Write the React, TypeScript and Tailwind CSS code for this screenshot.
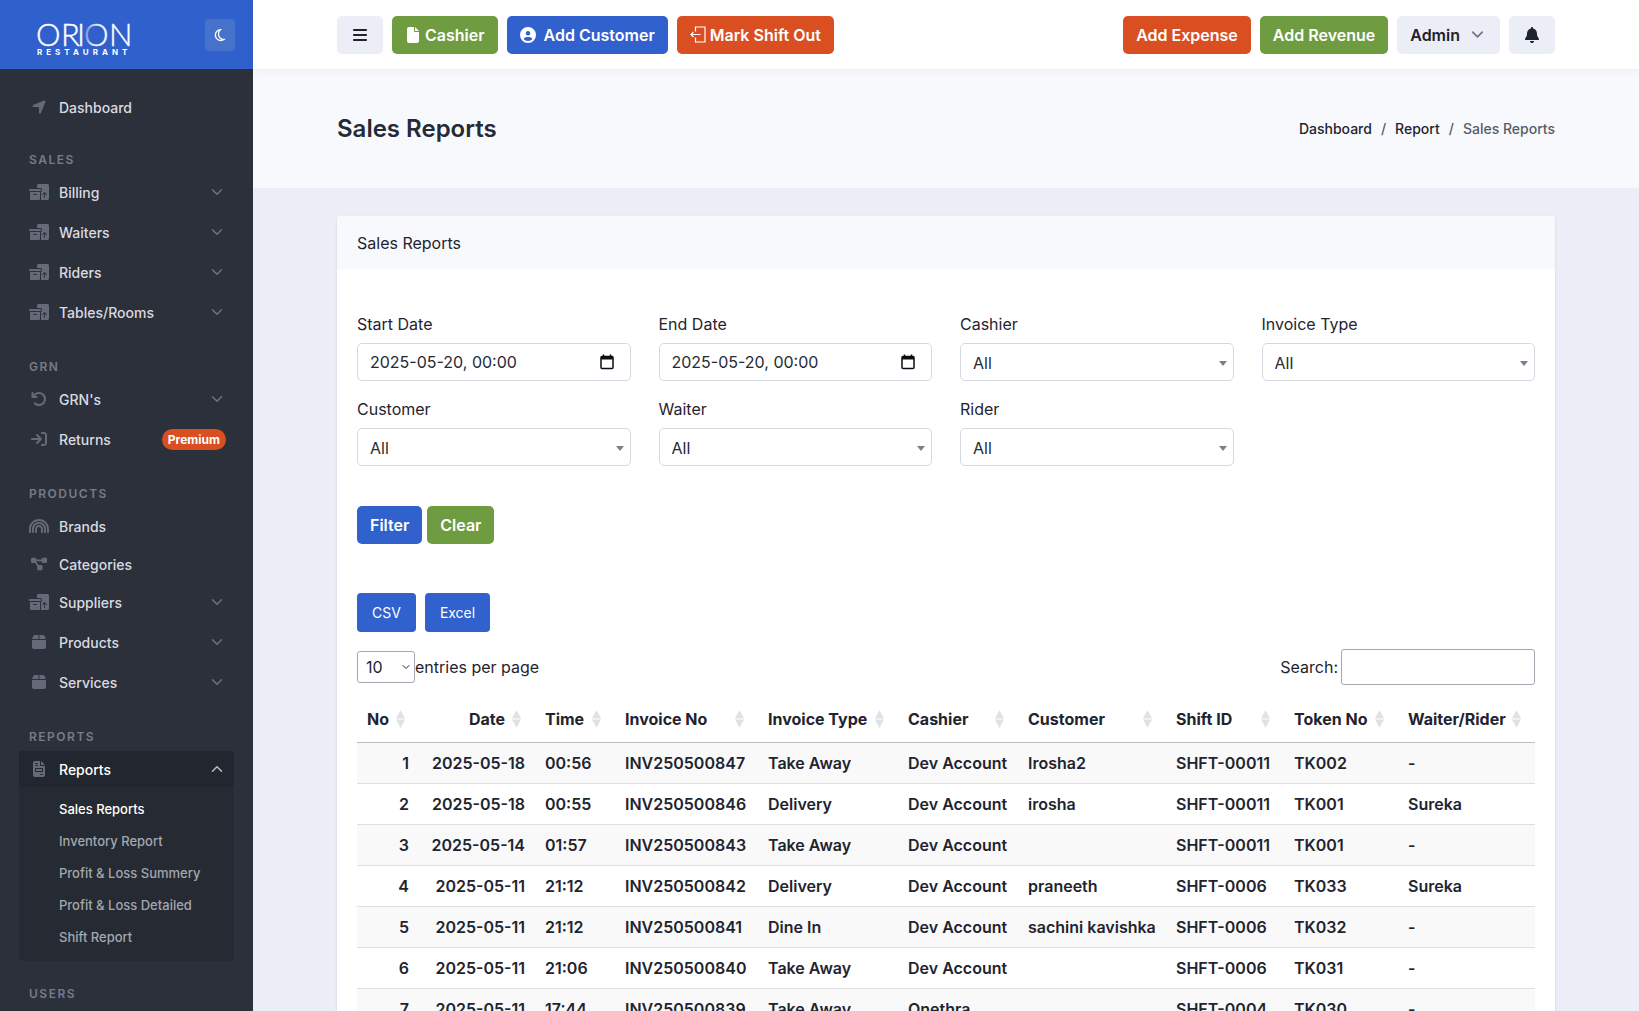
import type { ReactNode } from 'react';
import type { IconType } from 'react-icons';
import {
  FaArrowRightToBracket,
  FaArrowRotateLeft,
  FaBars,
  FaBell,
  FaBox,
  FaBoxesPacking,
  FaCircleUser,
  FaDiagramProject,
  FaFile,
  FaFileInvoice,
  FaLocationArrow,
  FaRainbow,
  FaRegMoon,
} from 'react-icons/fa6';
import { ChevronDown, ChevronUp } from 'lucide-react';

type NavItem = { label: string; icon: IconType; submenu?: boolean; badge?: string };

const navGroups: { title: string; items: NavItem[] }[] = [
  {
    title: 'Sales',
    items: [
      { label: 'Billing', icon: FaBoxesPacking, submenu: true },
      { label: 'Waiters', icon: FaBoxesPacking, submenu: true },
      { label: 'Riders', icon: FaBoxesPacking, submenu: true },
      { label: 'Tables/Rooms', icon: FaBoxesPacking, submenu: true },
    ],
  },
  {
    title: 'GRN',
    items: [
      { label: "GRN's", icon: FaArrowRotateLeft, submenu: true },
      { label: 'Returns', icon: FaArrowRightToBracket, badge: 'Premium' },
    ],
  },
  {
    title: 'Products',
    items: [
      { label: 'Brands', icon: FaRainbow },
      { label: 'Categories', icon: FaDiagramProject },
      { label: 'Suppliers', icon: FaBoxesPacking, submenu: true },
      { label: 'Products', icon: FaBox, submenu: true },
      { label: 'Services', icon: FaBox, submenu: true },
    ],
  },
];

const reportLinks = ['Sales Reports', 'Inventory Report', 'Profit & Loss Summery', 'Profit & Loss Detailed', 'Shift Report'];

const columns = [
  { label: 'No', width: 'w-[62px]', right: true },
  { label: 'Date', width: 'w-[116px]', right: true },
  { label: 'Time', width: 'w-[80px]' },
  { label: 'Invoice No', width: 'w-[143px]' },
  { label: 'Invoice Type', width: 'w-[140px]' },
  { label: 'Cashier', width: 'w-[120px]' },
  { label: 'Customer', width: 'w-[148px]' },
  { label: 'Shift ID', width: 'w-[118px]' },
  { label: 'Token No', width: 'w-[114px]' },
  { label: 'Waiter/Rider', width: 'w-[137px]' },
];

const rows = [
  ['1', '2025-05-18', '00:56', 'INV250500847', 'Take Away', 'Dev Account', 'Irosha2', 'SHFT-00011', 'TK002', '-'],
  ['2', '2025-05-18', '00:55', 'INV250500846', 'Delivery', 'Dev Account', 'irosha', 'SHFT-00011', 'TK001', 'Sureka'],
  ['3', '2025-05-14', '01:57', 'INV250500843', 'Take Away', 'Dev Account', '', 'SHFT-00011', 'TK001', '-'],
  ['4', '2025-05-11', '21:12', 'INV250500842', 'Delivery', 'Dev Account', 'praneeth', 'SHFT-0006', 'TK033', 'Sureka'],
  ['5', '2025-05-11', '21:12', 'INV250500841', 'Dine In', 'Dev Account', 'sachini kavishka', 'SHFT-0006', 'TK032', '-'],
  ['6', '2025-05-11', '21:06', 'INV250500840', 'Take Away', 'Dev Account', '', 'SHFT-0006', 'TK031', '-'],
  ['7', '2025-05-11', '17:44', 'INV250500839', 'Take Away', 'Onethra', '', 'SHFT-0004', 'TK030', '-'],
];

const Logo = () => (
  <svg width="100" height="48" viewBox="-2 -8 100 48" role="img" aria-label="Orion Restaurant">
    <defs>
      <linearGradient id="eclipse" x1="0" x2="1" y1="0.2" y2="0.5">
        <stop offset="0" stopColor="#fff" stopOpacity="0.1" />
        <stop offset="0.5" stopColor="#fff" stopOpacity="0.8" />
        <stop offset="1" stopColor="#fff" />
      </linearGradient>
    </defs>
    <g fill="#fff" stroke="#fff" strokeWidth="0.4" fontFamily="Lato, sans-serif" fontSize="31" fontWeight="300">
      <text x="-1 24 40" y="25">
        ORI
      </text>
      <text x="47" y="25" fill="url(#eclipse)" stroke="url(#eclipse)">
        O
      </text>
      <text x="72" y="25">
        N
      </text>
    </g>
    <text x="0" y="34" fill="#fff" fontFamily="Inter, sans-serif" fontSize="8" fontWeight="700" letterSpacing="4">
      RESTAURANT
    </text>
  </svg>
);

const ShiftOutIcon = () => (
  <svg width="16" height="17" viewBox="0 0 16 17" fill="none" stroke="currentColor" strokeWidth="1.2" className="mr-1">
    <path d="M5.5 5.5V1H15v15H5.5v-4.5" />
    <path d="M10.5 8.5H1M3.5 6L1 8.5 3.5 11" />
  </svg>
);

const NavLink = ({ item }: { item: NavItem }) => {
  const Icon = item.icon;
  return (
    <a
      href="#"
      className={`flex h-9 items-center rounded pr-3 pl-2.5 text-[14px] font-medium text-[#d9dbe0] ${
        item.submenu || item.badge ? 'mb-1' : 'mb-0.5'
      }`}
    >
      <span className="mr-2.5 flex w-5 justify-center text-base text-[#656a78]">
        <Icon className={item.icon === FaBoxesPacking || item.icon === FaRainbow ? 'size-5' : ''} />
      </span>
      <span className="flex-1">{item.label}</span>
      {item.submenu && <ChevronDown size={18} strokeWidth={2} className="-mr-1 text-[#6d7280]" />}
      {item.badge && (
        <span className="-mr-1 rounded-full bg-[#d94f22] px-1.5 text-[12px] leading-[21px] font-bold text-white">{item.badge}</span>
      )}
    </a>
  );
};

const NavHeading = ({ children }: { children: ReactNode }) => (
  <h2 className="pt-[23px] pb-1 pl-2.5 text-[12px] leading-5 font-semibold tracking-[1.5px] text-[#777c88] uppercase">{children}</h2>
);

const Sidebar = () => (
  <aside className="flex w-[253px] shrink-0 flex-col overflow-hidden bg-[#2c303b]">
    <div className="flex h-[69px] shrink-0 items-center justify-between bg-[#2f60cb] pr-[18px] pl-[35px]">
      <a href="#" className="pt-1">
        <Logo />
      </a>
      <button type="button" aria-label="Dark mode" className="flex h-8 w-[30px] items-center justify-center rounded bg-[#4672cb] text-white">
        <FaRegMoon size={14} />
      </button>
    </div>
    <nav className="px-[19px] pt-5">
      <NavLink item={{ label: 'Dashboard', icon: FaLocationArrow }} />
      {navGroups.map((group) => (
        <div key={group.title}>
          <NavHeading>{group.title}</NavHeading>
          {group.items.map((item) => (
            <NavLink key={item.label} item={item} />
          ))}
        </div>
      ))}
      <NavHeading>Reports</NavHeading>
      <div className="rounded bg-[#262a32]">
        <a href="#" className="flex h-9 items-center rounded-t bg-[#22262e] pr-3 pl-2.5 text-[14px] font-medium text-white">
          <span className="mr-2.5 flex w-5 justify-center text-base text-[#656a78]">
            <FaFileInvoice />
          </span>
          <span className="flex-1">Reports</span>
          <ChevronUp size={18} strokeWidth={2} className="-mr-1 text-[#b9bcc4]" />
        </a>
        <ul className="py-[7px] pl-10">
          {reportLinks.map((label, i) => (
            <li key={label}>
              <a href="#" className={`flex h-8 items-center text-[13px] font-medium ${i === 0 ? 'text-white' : 'text-[#a3a7b0]'}`}>
                {label}
              </a>
            </li>
          ))}
        </ul>
      </div>
      <NavHeading>Users</NavHeading>
    </nav>
  </aside>
);

const buttonTones = {
  green: 'bg-[#6f9c40] text-white',
  blue: 'bg-[#3061cd] text-white',
  orange: 'bg-[#d94f22] text-white',
  light: 'bg-[#ebeef6] text-[#1d222c]',
};

const Button = ({ tone, label, children }: { tone: keyof typeof buttonTones; label?: string; children: ReactNode }) => (
  <button
    type="button"
    aria-label={label}
    className={`flex h-[38px] items-center rounded-[5px] px-[13px] text-[16px] font-semibold whitespace-nowrap ${buttonTones[tone]}`}
  >
    {children}
  </button>
);

const Header = () => (
  <header className="relative z-10 flex h-[69px] shrink-0 items-center justify-between bg-white px-[84px] shadow-[0_2px_8px_rgba(40,50,80,0.06)]">
    <div className="flex gap-[9px]">
      <Button tone="light" label="Toggle sidebar">
        <span className="flex w-5 justify-center">
          <FaBars size={16} />
        </span>
      </Button>
      <Button tone="green">
        <FaFile size={16} className="mr-1" />
        Cashier
      </Button>
      <Button tone="blue">
        <FaCircleUser size={16} className="mr-2" />
        Add Customer
      </Button>
      <Button tone="orange">
        <ShiftOutIcon />
        Mark Shift Out
      </Button>
    </div>
    <div className="flex gap-[9px]">
      <Button tone="orange">Add Expense</Button>
      <Button tone="green">Add Revenue</Button>
      <Button tone="light">
        Admin
        <ChevronDown size={19} strokeWidth={2} className="ml-2 text-[#6c7280]" />
      </Button>
      <Button tone="light" label="Notifications">
        <span className="flex w-5 justify-center">
          <FaBell size={16} />
        </span>
      </Button>
    </div>
  </header>
);

const fieldClass =
  'h-[38px] w-full appearance-none rounded-[5px] border border-[#d6d8e1] bg-white px-3 text-[16px] text-[#252a35] outline-none';

const DateField = ({ id, label }: { id: string; label: string }) => (
  <div className="flex flex-col gap-1.5">
    <label htmlFor={id} className="leading-[25px]">
      {label}
    </label>
    <div className="relative">
      <input id={id} type="text" defaultValue="2025-05-20, 00:00" className={fieldClass} />
      <button type="button" aria-label={`Pick ${label}`} className="absolute top-[11px] right-[17px]">
        <svg width="14" height="16" viewBox="0 0 14 16" fill="none" stroke="#0b0d12">
          <rect x="1" y="2.5" width="12" height="12" rx="1" strokeWidth="1.5" />
          <path d="M1 4h12" strokeWidth="3" />
          <path d="M3.5 0.5v2M10.5 0.5v2" strokeWidth="1.5" />
        </svg>
      </button>
    </div>
  </div>
);

const SelectField = ({ id, label }: { id: string; label: string }) => (
  <div className="flex flex-col gap-1.5">
    <label htmlFor={id} className="leading-[25px]">
      {label}
    </label>
    <div className="relative">
      <select id={id} className={`${fieldClass} pt-0.5`}>
        <option>All</option>
      </select>
      <svg width="8" height="5" viewBox="0 0 8 5" className="pointer-events-none absolute top-[18px] right-[7px]">
        <path d="M0 0h8L4 5z" fill="#7b7f88" />
      </svg>
    </div>
  </div>
);

const SortIcon = () => (
  <svg width="9" height="18" viewBox="0 0 9 18" fill="#e0e2e7" className="shrink-0">
    <path d="M4.5 0L9 8.5H0z" />
    <path d="M0 9.5h9L4.5 18z" />
  </svg>
);

const ReportTable = () => (
  <table className="mt-3.5 w-full table-fixed border-collapse text-[16px] leading-6 font-semibold whitespace-nowrap">
    <thead>
      <tr className="border-b border-[#b9bdc6]">
        {columns.map((col) => (
          <th key={col.label} scope="col" className={`h-[43px] pb-0.5 pl-2.5 font-bold ${col.width}`}>
            <span className={`flex items-center pr-3.5 ${col.right ? 'justify-end gap-[7px]' : 'justify-between'}`}>
              {col.label}
              <SortIcon />
            </span>
          </th>
        ))}
      </tr>
    </thead>
    <tbody>
      {rows.map((row) => (
        <tr key={row[0]} className="border-b border-[#dddfe5] odd:bg-[#f9f9fa]">
          {row.map((cell, i) => (
            <td key={columns[i].label} className={`px-2.5 py-2 ${columns[i].right ? 'text-right' : ''}`}>
              {cell}
            </td>
          ))}
        </tr>
      ))}
    </tbody>
  </table>
);

const App = () => (
  <div className="flex h-screen overflow-hidden bg-[#ebeef7] font-['Inter',sans-serif] text-[16px] text-[#1f242f]">
    <Sidebar />
    <div className="flex min-w-0 flex-1 flex-col">
      <Header />
      <main className="min-h-0 flex-1 overflow-y-auto [scrollbar-width:none]">
        <div className="flex h-[119px] items-center justify-between bg-[#f8f9fc] px-[84px]">
          <h1 className="text-2xl font-semibold text-[#252a36]">Sales Reports</h1>
          <nav aria-label="Breadcrumb" className="flex gap-[9px] text-[14px] font-medium">
            <a href="#">Dashboard</a>
            <span className="text-[#565c69]">/</span>
            <a href="#">Report</a>
            <span className="text-[#565c69]">/</span>
            <span className="text-[#565c69]">Sales Reports</span>
          </nav>
        </div>

        <div className="px-[84px] pt-7 pb-7">
          <section className="rounded bg-white shadow-sm">
            <h3 className="flex h-[53px] items-center rounded-t bg-[#f8f9fc] px-5">Sales Reports</h3>
            <div className="px-5 pt-[43px] pb-5">
              <form>
                <div className="grid grid-cols-4 gap-x-7 gap-y-4">
                  <DateField id="start-date" label="Start Date" />
                  <DateField id="end-date" label="End Date" />
                  <SelectField id="cashier" label="Cashier" />
                  <SelectField id="invoice-type" label="Invoice Type" />
                  <SelectField id="customer" label="Customer" />
                  <SelectField id="waiter" label="Waiter" />
                  <SelectField id="rider" label="Rider" />
                </div>
                <div className="mt-10 flex gap-[5px]">
                  <Button tone="blue">Filter</Button>
                  <Button tone="green">Clear</Button>
                </div>
              </form>

              <div className="mt-[49px] flex gap-[9px] text-[14px] text-white">
                <button type="button" className="h-[39px] rounded-[4px] bg-[#3061cd] px-[15px]">
                  CSV
                </button>
                <button type="button" className="h-[39px] rounded-[4px] bg-[#3061cd] px-[15px]">
                  Excel
                </button>
              </div>

              <div className="mt-[17px] flex items-center justify-between">
                <div className="flex items-center">
                  <div className="relative">
                    <select id="page-size" className="h-8 w-[58px] appearance-none rounded-[3px] border border-[#a5a8b0] bg-white pl-2">
                      <option>10</option>
                    </select>
                    <ChevronDown size={12} strokeWidth={2} className="pointer-events-none absolute top-2.5 right-[3px]" />
                  </div>
                  <label htmlFor="page-size">entries per page</label>
                </div>
                <div className="flex items-center gap-[3px]">
                  <label htmlFor="search">Search:</label>
                  <input id="search" type="search" className="h-9 w-[194px] rounded-[3px] border border-[#a5a8b0] px-2" />
                </div>
              </div>

              <ReportTable />
            </div>
          </section>
        </div>
      </main>
    </div>
  </div>
);

export default App;
